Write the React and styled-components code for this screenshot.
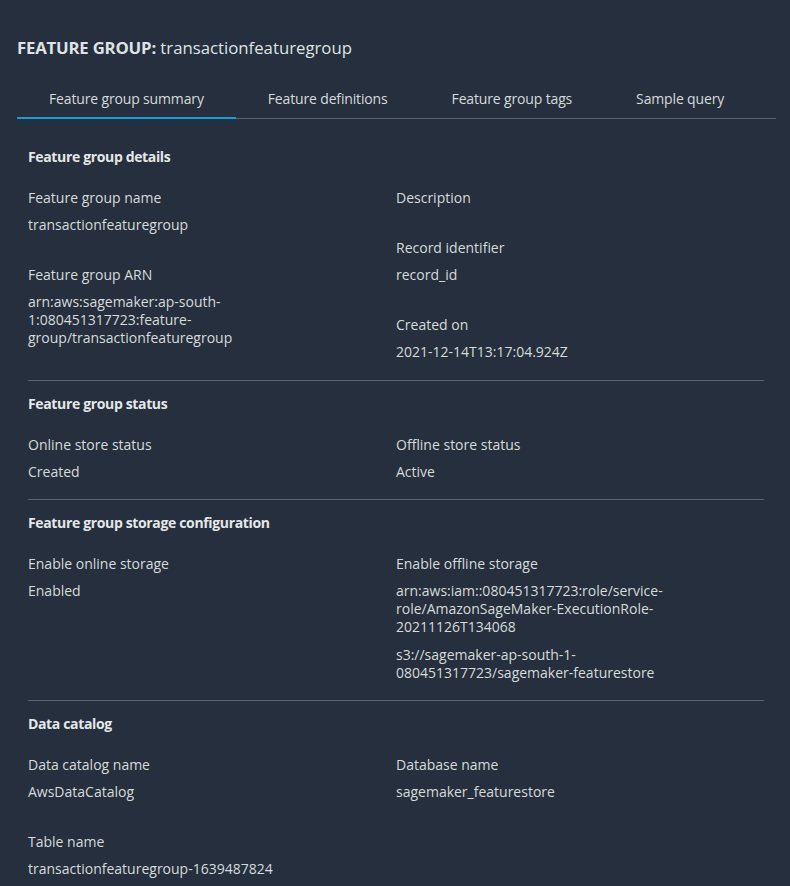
import React from "react";
import styled, { createGlobalStyle } from "styled-components";

const GlobalStyle = createGlobalStyle`
  html, body { margin: 0; padding: 0; background: #252f3d; }
  body {
    font-family: "Open Sans", "Noto Sans", Arial, sans-serif;
    color: #d5dbdb;
    font-size: 14px;
    line-height: 18px;
  }
`;

const Page = styled.div`
  min-height: 886px;
  box-sizing: border-box;
  padding: 36px 14px 0 17px;
  background: #252f3d;
`;

const Title = styled.h1`
  margin: 0;
  font-size: 16.75px;
  line-height: 24px;
  font-weight: 400;
  color: #dfe3e6;
  white-space: nowrap;
`;

const TitleKey = styled.span`
  font-weight: 700;
  letter-spacing: -0.2px;
`;

const TabList = styled.div`
  display: flex;
  margin-top: 20px;
  border-bottom: 1px solid #5c636d;
`;

const Tab = styled.div`
  padding: 9px 32px 8px;
  margin-bottom: -1px;
  line-height: 20px;
  font-size: 14px;
  color: #d5dbdb;
  white-space: nowrap;
  letter-spacing: -0.15px;
  border-bottom: 2px solid ${(p) => (p.$active ? "#12a0d6" : "transparent")};
`;

const Content = styled.div`
  padding: 15px 12px 0 11px;
`;

const Section = styled.section`
  padding: 14px 0 ${(p) => (p.$last ? "0" : p.$first ? "19px" : "18px")};
  border-bottom: ${(p) => (p.$last ? "none" : "1px solid #5c636d")};
`;

const SectionTitle = styled.h2`
  margin: 0 0 23px;
  font-size: 14px;
  line-height: 18px;
  font-weight: 700;
  letter-spacing: -0.35px;
  color: #e4e7ea;
`;

const Columns = styled.div`
  display: grid;
  grid-template-columns: 1fr 1fr;
`;

const Column = styled.div`
  display: flex;
  flex-direction: column;
  gap: 32px;
  padding-right: 38px;
  min-width: 0;
`;

const Item = styled.div`
  display: flex;
  flex-direction: column;
  gap: 9px;
`;

const Label = styled.div`
  color: #d5dbdb;
`;

const Value = styled.div`
  display: flex;
  flex-direction: column;
  gap: 10px;
  color: #d5dbdb;
`;

const Para = styled.div``;

function KV({ label, values }) {
  return (
    <Item>
      <Label>{label}</Label>
      {values && values.length > 0 && (
        <Value>
          {values.map((v) => (
            <Para key={v}>{v}</Para>
          ))}
        </Value>
      )}
    </Item>
  );
}

const tabs = [
  "Feature group summary",
  "Feature definitions",
  "Feature group tags",
  "Sample query",
];

const sections = [
  {
    title: "Feature group details",
    left: [
      { label: "Feature group name", values: ["transactionfeaturegroup"] },
      {
        label: "Feature group ARN",
        values: [
          "arn:aws:sagemaker:ap-south-1:080451317723:feature-group/transactionfeaturegroup",
        ],
      },
    ],
    right: [
      { label: "Description", values: [] },
      { label: "Record identifier", values: ["record_id"] },
      { label: "Created on", values: ["2021-12-14T13:17:04.924Z"] },
    ],
  },
  {
    title: "Feature group status",
    left: [{ label: "Online store status", values: ["Created"] }],
    right: [{ label: "Offline store status", values: ["Active"] }],
  },
  {
    title: "Feature group storage configuration",
    left: [{ label: "Enable online storage", values: ["Enabled"] }],
    right: [
      {
        label: "Enable offline storage",
        values: [
          "arn:aws:iam::080451317723:role/service-role/AmazonSageMaker-ExecutionRole-20211126T134068",
          "s3://sagemaker-ap-south-1-080451317723/sagemaker-featurestore",
        ],
      },
    ],
  },
  {
    title: "Data catalog",
    left: [
      { label: "Data catalog name", values: ["AwsDataCatalog"] },
      { label: "Table name", values: ["transactionfeaturegroup-1639487824"] },
    ],
    right: [{ label: "Database name", values: ["sagemaker_featurestore"] }],
  },
];

export default function App() {
  return (
    <Page>
      <GlobalStyle />
      <Title>
        <TitleKey>FEATURE GROUP:</TitleKey> transactionfeaturegroup
      </Title>
      <TabList>
        {tabs.map((t, i) => (
          <Tab key={t} $active={i === 0}>
            {t}
          </Tab>
        ))}
      </TabList>
      <Content>
        {sections.map((s, i) => (
          <Section
            key={s.title}
            $first={i === 0}
            $last={i === sections.length - 1}
          >
            <SectionTitle>{s.title}</SectionTitle>
            <Columns>
              <Column>
                {s.left.map((kv) => (
                  <KV key={kv.label} {...kv} />
                ))}
              </Column>
              <Column>
                {s.right.map((kv) => (
                  <KV key={kv.label} {...kv} />
                ))}
              </Column>
            </Columns>
          </Section>
        ))}
      </Content>
    </Page>
  );
}
